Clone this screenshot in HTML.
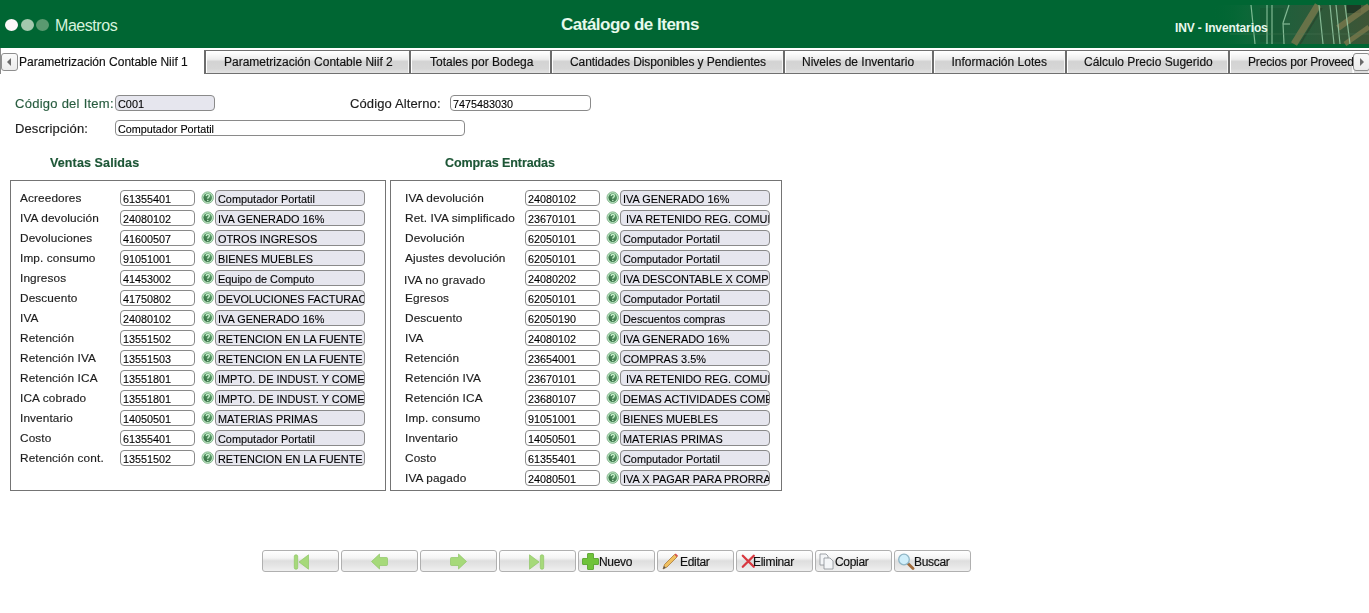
<!DOCTYPE html>
<html><head><meta charset="utf-8">
<style>
*{margin:0;padding:0;box-sizing:border-box}
html,body{width:1369px;height:613px;overflow:hidden;background:#fff;font-family:"Liberation Sans",sans-serif;position:relative}
#wrap{position:absolute;left:0;top:0;width:1369px;height:613px;filter:grayscale(0.001)}
.tab span,.lbl,.btn span{-webkit-text-stroke:0.15px currentColor}
.inp{-webkit-text-stroke:0.1px #000}
.a{position:absolute;white-space:nowrap}
#hdr{position:absolute;left:0;top:0;width:1369px;height:48px;background:#006633;overflow:hidden}
.dot{position:absolute;top:19px;width:13px;height:12px;border-radius:50%}
#tabs{position:absolute;left:0;top:48px;width:1369px;height:26px;overflow:hidden}
.tab{position:absolute;top:2px;height:24px;border:1px solid #707070;border-left:2px solid #6c6c6c;border-right:none;box-shadow:inset 1px 1px 0 #fff,inset -1px 0 0 #f6f6f6;
 background:linear-gradient(#ffffff 0%,#fbfbfb 12%,#ececec 38%,#d3d3d3 48%,#d6d6d6 80%,#e2e2e2 100%);
 font-size:12px;color:#111;white-space:nowrap;overflow:hidden}
.tab span{position:absolute;top:4px}
.tab.act{top:0;height:26px;background:#fff;border:none;border-left:1px solid #8a8a8a;box-shadow:none}
.sbtn{position:absolute;top:5px;width:17px;height:18px;border:1px solid #8e8e8e;border-radius:3px;background:linear-gradient(#fafafa,#ececec)}
.lbl{position:absolute;font-size:11.8px;letter-spacing:0.12px;color:#1c1c1c;white-space:nowrap}
.lb13{font-size:13px}
.inp{position:absolute;height:16px;border:1px solid #8a8a8a;border-radius:4px;background:#fff;font-size:10.8px;line-height:16px;padding-left:2px;color:#000;white-space:nowrap;overflow:hidden}
.gry{background:#e6e6ee;font-size:10.9px}
.box{position:absolute;border:1px solid #747474}
.ico{position:absolute;width:14px;height:14px}
.btn{position:absolute;top:550px;width:77px;height:22px;border:1px solid #b0b0b0;border-radius:3px;
 background:linear-gradient(#ffffff 0%,#f4f4f4 35%,#dedede 50%,#e6e6e6 75%,#f0f0f0 100%);font-size:12px;letter-spacing:-0.3px;color:#111}
.btn span{position:absolute;top:3.5px}
.btn svg{position:absolute}
</style></head><body><div id="wrap"><svg width="0" height="0" style="position:absolute"><defs><linearGradient id="ig" x1="0.8" y1="0.1" x2="0.2" y2="0.9"><stop offset="0" stop-color="#5f9e6c"/><stop offset="1" stop-color="#356f44"/></linearGradient></defs></svg>
<div id="hdr">
 <svg class="a" style="left:1210px;top:0" width="159" height="48" viewBox="0 0 159 48">
  <defs>
   <linearGradient id="hg" x1="0" x2="1" y1="0" y2="0">
    <stop offset="0" stop-color="#006633" stop-opacity="0"/>
    <stop offset="0.22" stop-color="#0b6838" stop-opacity="0.9"/>
    <stop offset="0.45" stop-color="#1f5f3b"/>
    <stop offset="0.7" stop-color="#2e5a3a"/>
    <stop offset="1" stop-color="#3e5536"/>
   </linearGradient>
   <filter id="bl" x="-5%" y="-5%" width="110%" height="110%"><feGaussianBlur stdDeviation="0.7"/></filter>
  </defs>
  <rect x="0" y="5" width="159" height="39" fill="url(#hg)"/>
  <g filter="url(#bl)">
  <rect x="137" y="5" width="14" height="8" fill="#17301f" opacity="0.8"/>
  <rect x="50" y="8" width="24" height="34" fill="#15552f" opacity="0.5"/>
  <g stroke="#7d7a4e" opacity="0.75">
   <line x1="84" y1="44" x2="108" y2="5" stroke-width="7"/>
   <line x1="128" y1="28" x2="159" y2="6" stroke-width="6"/>
   <line x1="135" y1="44" x2="159" y2="27" stroke-width="5"/>
  </g>
  <g stroke="#2a3f2a" opacity="0.6">
   <line x1="90" y1="44" x2="112" y2="8" stroke-width="1.5"/>
  </g>
  <g stroke="#a3d8b2" stroke-width="1.2" opacity="0.75">
   <line x1="41" y1="5" x2="45" y2="44"/><line x1="57" y1="5" x2="57" y2="44"/>
   <line x1="62" y1="5" x2="62" y2="44"/><line x1="73" y1="23" x2="74" y2="44"/>
   <line x1="73" y1="23" x2="79" y2="5"/><line x1="73" y1="24" x2="80" y2="24"/>
   <line x1="109" y1="5" x2="113" y2="44"/><line x1="120" y1="5" x2="124" y2="44"/>
   <line x1="126" y1="5" x2="130" y2="44"/><line x1="135" y1="5" x2="140" y2="44"/>
  </g>
  <line x1="20" y1="34" x2="159" y2="34" stroke="#4f7f5c" stroke-width="1" opacity="0.4"/>
  </g>
 </svg>
 <div class="dot" style="left:5px;background:#fcf7f9"></div>
 <div class="dot" style="left:21px;background:#a4c9ae"></div>
 <div class="dot" style="left:36px;background:#5a9a70"></div>
 <div class="a" style="left:55px;top:17px;font-size:16px;letter-spacing:-0.45px;color:#d6f3dd">Maestros</div>
 <div class="a" style="left:561px;top:15px;font-size:17px;letter-spacing:-0.5px;font-weight:bold;color:#e6f9ec">Catálogo de Items</div>
 <div class="a" style="left:1175px;top:21px;font-size:12px;font-weight:bold;color:#eaf8ee;letter-spacing:-0.12px">INV - Inventarios</div>
</div>
<div id="tabs">
 <div class="tab act" style="left:0;width:204px"><span style="left:18px;top:7px">Parametrización Contable Niif 1</span>
  <div class="sbtn" style="left:0px"><svg class="a" style="left:3px;top:3px" width="8" height="10"><path d="M2 5 L6 1 L6 9 Z" fill="#6a6a6a"/></svg></div>
 </div>
 <div class="tab" style="left:204px;width:205px"><span style="left:18px">Parametrización Contable Niif 2</span></div>
 <div class="tab" style="left:409px;width:141px"><span style="left:19px">Totales por Bodega</span></div>
 <div class="tab" style="left:550px;width:233px"><span style="left:18px;letter-spacing:-0.08px">Cantidades Disponibles y Pendientes</span></div>
 <div class="tab" style="left:783px;width:149px"><span style="left:17px">Niveles de Inventario</span></div>
 <div class="tab" style="left:932px;width:133px"><span style="left:17.5px">Información Lotes</span></div>
 <div class="tab" style="left:1065px;width:163px"><span style="left:17px">Cálculo Precio Sugerido</span></div>
 <div class="tab" style="left:1228px;width:125px"><span style="left:18px;letter-spacing:-0.15px">Precios por Proveedor</span></div>
 <div class="tab" style="left:1353px;width:16px;border-left:none"></div>
 <div class="sbtn" style="left:1353px"><svg class="a" style="left:4px;top:3px" width="8" height="10"><path d="M6 5 L2 1 L2 9 Z" fill="#6a6a6a"/></svg></div>
</div>

<div class="lbl lb13" style="left:15px;top:96px;color:#285c3f;letter-spacing:0.26px">Código del Item:</div>
<div class="inp gry" style="left:115px;top:95px;width:100px">C001</div>
<div class="lbl lb13" style="left:350px;top:96px">Código Alterno:</div>
<div class="inp" style="left:450px;top:95px;width:141px">7475483030</div>
<div class="lbl lb13" style="left:15px;top:121px">Descripción:</div>
<div class="inp" style="left:115px;top:120px;width:350px">Computador Portatil</div>
<div class="lbl" style="left:50px;top:156px;font-size:12.5px;font-weight:bold;color:#1d5636">Ventas Salidas</div>
<div class="lbl" style="left:445px;top:156px;font-size:12.5px;font-weight:bold;color:#1d5636;letter-spacing:-0.08px">Compras Entradas</div>
<div class="box" style="left:10px;top:180px;width:376px;height:311px"></div>
<div class="box" style="left:390px;top:180px;width:392px;height:311px"></div>
<div class="lbl" style="left:20px;top:191px">Acreedores</div>
<div class="inp" style="left:120px;top:190px;width:75px">61355401</div>
<svg class="ico" style="left:201px;top:191px" width="14" height="14" viewBox="0 0 14 14"><circle cx="6.7" cy="6.6" r="5.7" fill="#c4ecca" stroke="#76ab80" stroke-width="0.9"/><circle cx="6.7" cy="6.6" r="4.3" fill="url(#ig)"/><path d="M5.3 5.0 Q5.3 3.4 6.9 3.4 Q8.4 3.4 8.4 4.8 Q8.4 5.8 7.4 6.3 Q6.8 6.7 6.8 7.8" fill="none" stroke="#c6eecb" stroke-width="1.3"/><circle cx="6.8" cy="9.5" r="0.8" fill="#c6eecb"/></svg>
<div class="inp gry" style="left:215px;top:190px;width:150px">Computador Portatil</div>
<div class="lbl" style="left:20px;top:211px">IVA devolución</div>
<div class="inp" style="left:120px;top:210px;width:75px">24080102</div>
<svg class="ico" style="left:201px;top:211px" width="14" height="14" viewBox="0 0 14 14"><circle cx="6.7" cy="6.6" r="5.7" fill="#c4ecca" stroke="#76ab80" stroke-width="0.9"/><circle cx="6.7" cy="6.6" r="4.3" fill="url(#ig)"/><path d="M5.3 5.0 Q5.3 3.4 6.9 3.4 Q8.4 3.4 8.4 4.8 Q8.4 5.8 7.4 6.3 Q6.8 6.7 6.8 7.8" fill="none" stroke="#c6eecb" stroke-width="1.3"/><circle cx="6.8" cy="9.5" r="0.8" fill="#c6eecb"/></svg>
<div class="inp gry" style="left:215px;top:210px;width:150px">IVA GENERADO 16%</div>
<div class="lbl" style="left:20px;top:231px">Devoluciones</div>
<div class="inp" style="left:120px;top:230px;width:75px">41600507</div>
<svg class="ico" style="left:201px;top:231px" width="14" height="14" viewBox="0 0 14 14"><circle cx="6.7" cy="6.6" r="5.7" fill="#c4ecca" stroke="#76ab80" stroke-width="0.9"/><circle cx="6.7" cy="6.6" r="4.3" fill="url(#ig)"/><path d="M5.3 5.0 Q5.3 3.4 6.9 3.4 Q8.4 3.4 8.4 4.8 Q8.4 5.8 7.4 6.3 Q6.8 6.7 6.8 7.8" fill="none" stroke="#c6eecb" stroke-width="1.3"/><circle cx="6.8" cy="9.5" r="0.8" fill="#c6eecb"/></svg>
<div class="inp gry" style="left:215px;top:230px;width:150px">OTROS INGRESOS</div>
<div class="lbl" style="left:20px;top:251px">Imp. consumo</div>
<div class="inp" style="left:120px;top:250px;width:75px">91051001</div>
<svg class="ico" style="left:201px;top:251px" width="14" height="14" viewBox="0 0 14 14"><circle cx="6.7" cy="6.6" r="5.7" fill="#c4ecca" stroke="#76ab80" stroke-width="0.9"/><circle cx="6.7" cy="6.6" r="4.3" fill="url(#ig)"/><path d="M5.3 5.0 Q5.3 3.4 6.9 3.4 Q8.4 3.4 8.4 4.8 Q8.4 5.8 7.4 6.3 Q6.8 6.7 6.8 7.8" fill="none" stroke="#c6eecb" stroke-width="1.3"/><circle cx="6.8" cy="9.5" r="0.8" fill="#c6eecb"/></svg>
<div class="inp gry" style="left:215px;top:250px;width:150px">BIENES MUEBLES</div>
<div class="lbl" style="left:20px;top:271px">Ingresos</div>
<div class="inp" style="left:120px;top:270px;width:75px">41453002</div>
<svg class="ico" style="left:201px;top:271px" width="14" height="14" viewBox="0 0 14 14"><circle cx="6.7" cy="6.6" r="5.7" fill="#c4ecca" stroke="#76ab80" stroke-width="0.9"/><circle cx="6.7" cy="6.6" r="4.3" fill="url(#ig)"/><path d="M5.3 5.0 Q5.3 3.4 6.9 3.4 Q8.4 3.4 8.4 4.8 Q8.4 5.8 7.4 6.3 Q6.8 6.7 6.8 7.8" fill="none" stroke="#c6eecb" stroke-width="1.3"/><circle cx="6.8" cy="9.5" r="0.8" fill="#c6eecb"/></svg>
<div class="inp gry" style="left:215px;top:270px;width:150px">Equipo de Computo</div>
<div class="lbl" style="left:20px;top:291px">Descuento</div>
<div class="inp" style="left:120px;top:290px;width:75px">41750802</div>
<svg class="ico" style="left:201px;top:291px" width="14" height="14" viewBox="0 0 14 14"><circle cx="6.7" cy="6.6" r="5.7" fill="#c4ecca" stroke="#76ab80" stroke-width="0.9"/><circle cx="6.7" cy="6.6" r="4.3" fill="url(#ig)"/><path d="M5.3 5.0 Q5.3 3.4 6.9 3.4 Q8.4 3.4 8.4 4.8 Q8.4 5.8 7.4 6.3 Q6.8 6.7 6.8 7.8" fill="none" stroke="#c6eecb" stroke-width="1.3"/><circle cx="6.8" cy="9.5" r="0.8" fill="#c6eecb"/></svg>
<div class="inp gry" style="left:215px;top:290px;width:150px">DEVOLUCIONES FACTURACION</div>
<div class="lbl" style="left:20px;top:311px">IVA</div>
<div class="inp" style="left:120px;top:310px;width:75px">24080102</div>
<svg class="ico" style="left:201px;top:311px" width="14" height="14" viewBox="0 0 14 14"><circle cx="6.7" cy="6.6" r="5.7" fill="#c4ecca" stroke="#76ab80" stroke-width="0.9"/><circle cx="6.7" cy="6.6" r="4.3" fill="url(#ig)"/><path d="M5.3 5.0 Q5.3 3.4 6.9 3.4 Q8.4 3.4 8.4 4.8 Q8.4 5.8 7.4 6.3 Q6.8 6.7 6.8 7.8" fill="none" stroke="#c6eecb" stroke-width="1.3"/><circle cx="6.8" cy="9.5" r="0.8" fill="#c6eecb"/></svg>
<div class="inp gry" style="left:215px;top:310px;width:150px">IVA GENERADO 16%</div>
<div class="lbl" style="left:20px;top:331px">Retención</div>
<div class="inp" style="left:120px;top:330px;width:75px">13551502</div>
<svg class="ico" style="left:201px;top:331px" width="14" height="14" viewBox="0 0 14 14"><circle cx="6.7" cy="6.6" r="5.7" fill="#c4ecca" stroke="#76ab80" stroke-width="0.9"/><circle cx="6.7" cy="6.6" r="4.3" fill="url(#ig)"/><path d="M5.3 5.0 Q5.3 3.4 6.9 3.4 Q8.4 3.4 8.4 4.8 Q8.4 5.8 7.4 6.3 Q6.8 6.7 6.8 7.8" fill="none" stroke="#c6eecb" stroke-width="1.3"/><circle cx="6.8" cy="9.5" r="0.8" fill="#c6eecb"/></svg>
<div class="inp gry" style="left:215px;top:330px;width:150px">RETENCION EN LA FUENTE</div>
<div class="lbl" style="left:20px;top:351px">Retención IVA</div>
<div class="inp" style="left:120px;top:350px;width:75px">13551503</div>
<svg class="ico" style="left:201px;top:351px" width="14" height="14" viewBox="0 0 14 14"><circle cx="6.7" cy="6.6" r="5.7" fill="#c4ecca" stroke="#76ab80" stroke-width="0.9"/><circle cx="6.7" cy="6.6" r="4.3" fill="url(#ig)"/><path d="M5.3 5.0 Q5.3 3.4 6.9 3.4 Q8.4 3.4 8.4 4.8 Q8.4 5.8 7.4 6.3 Q6.8 6.7 6.8 7.8" fill="none" stroke="#c6eecb" stroke-width="1.3"/><circle cx="6.8" cy="9.5" r="0.8" fill="#c6eecb"/></svg>
<div class="inp gry" style="left:215px;top:350px;width:150px">RETENCION EN LA FUENTE</div>
<div class="lbl" style="left:20px;top:371px">Retención ICA</div>
<div class="inp" style="left:120px;top:370px;width:75px">13551801</div>
<svg class="ico" style="left:201px;top:371px" width="14" height="14" viewBox="0 0 14 14"><circle cx="6.7" cy="6.6" r="5.7" fill="#c4ecca" stroke="#76ab80" stroke-width="0.9"/><circle cx="6.7" cy="6.6" r="4.3" fill="url(#ig)"/><path d="M5.3 5.0 Q5.3 3.4 6.9 3.4 Q8.4 3.4 8.4 4.8 Q8.4 5.8 7.4 6.3 Q6.8 6.7 6.8 7.8" fill="none" stroke="#c6eecb" stroke-width="1.3"/><circle cx="6.8" cy="9.5" r="0.8" fill="#c6eecb"/></svg>
<div class="inp gry" style="left:215px;top:370px;width:150px">IMPTO. DE INDUST. Y COMERCIO</div>
<div class="lbl" style="left:20px;top:391px">ICA cobrado</div>
<div class="inp" style="left:120px;top:390px;width:75px">13551801</div>
<svg class="ico" style="left:201px;top:391px" width="14" height="14" viewBox="0 0 14 14"><circle cx="6.7" cy="6.6" r="5.7" fill="#c4ecca" stroke="#76ab80" stroke-width="0.9"/><circle cx="6.7" cy="6.6" r="4.3" fill="url(#ig)"/><path d="M5.3 5.0 Q5.3 3.4 6.9 3.4 Q8.4 3.4 8.4 4.8 Q8.4 5.8 7.4 6.3 Q6.8 6.7 6.8 7.8" fill="none" stroke="#c6eecb" stroke-width="1.3"/><circle cx="6.8" cy="9.5" r="0.8" fill="#c6eecb"/></svg>
<div class="inp gry" style="left:215px;top:390px;width:150px">IMPTO. DE INDUST. Y COMERCIO</div>
<div class="lbl" style="left:20px;top:411px">Inventario</div>
<div class="inp" style="left:120px;top:410px;width:75px">14050501</div>
<svg class="ico" style="left:201px;top:411px" width="14" height="14" viewBox="0 0 14 14"><circle cx="6.7" cy="6.6" r="5.7" fill="#c4ecca" stroke="#76ab80" stroke-width="0.9"/><circle cx="6.7" cy="6.6" r="4.3" fill="url(#ig)"/><path d="M5.3 5.0 Q5.3 3.4 6.9 3.4 Q8.4 3.4 8.4 4.8 Q8.4 5.8 7.4 6.3 Q6.8 6.7 6.8 7.8" fill="none" stroke="#c6eecb" stroke-width="1.3"/><circle cx="6.8" cy="9.5" r="0.8" fill="#c6eecb"/></svg>
<div class="inp gry" style="left:215px;top:410px;width:150px">MATERIAS PRIMAS</div>
<div class="lbl" style="left:20px;top:431px">Costo</div>
<div class="inp" style="left:120px;top:430px;width:75px">61355401</div>
<svg class="ico" style="left:201px;top:431px" width="14" height="14" viewBox="0 0 14 14"><circle cx="6.7" cy="6.6" r="5.7" fill="#c4ecca" stroke="#76ab80" stroke-width="0.9"/><circle cx="6.7" cy="6.6" r="4.3" fill="url(#ig)"/><path d="M5.3 5.0 Q5.3 3.4 6.9 3.4 Q8.4 3.4 8.4 4.8 Q8.4 5.8 7.4 6.3 Q6.8 6.7 6.8 7.8" fill="none" stroke="#c6eecb" stroke-width="1.3"/><circle cx="6.8" cy="9.5" r="0.8" fill="#c6eecb"/></svg>
<div class="inp gry" style="left:215px;top:430px;width:150px">Computador Portatil</div>
<div class="lbl" style="left:20px;top:451px">Retención cont.</div>
<div class="inp" style="left:120px;top:450px;width:75px">13551502</div>
<svg class="ico" style="left:201px;top:451px" width="14" height="14" viewBox="0 0 14 14"><circle cx="6.7" cy="6.6" r="5.7" fill="#c4ecca" stroke="#76ab80" stroke-width="0.9"/><circle cx="6.7" cy="6.6" r="4.3" fill="url(#ig)"/><path d="M5.3 5.0 Q5.3 3.4 6.9 3.4 Q8.4 3.4 8.4 4.8 Q8.4 5.8 7.4 6.3 Q6.8 6.7 6.8 7.8" fill="none" stroke="#c6eecb" stroke-width="1.3"/><circle cx="6.8" cy="9.5" r="0.8" fill="#c6eecb"/></svg>
<div class="inp gry" style="left:215px;top:450px;width:150px">RETENCION EN LA FUENTE</div>
<div class="lbl" style="left:405px;top:191px">IVA devolución</div>
<div class="inp" style="left:525px;top:190px;width:75px">24080102</div>
<svg class="ico" style="left:606px;top:191px" width="14" height="14" viewBox="0 0 14 14"><circle cx="6.7" cy="6.6" r="5.7" fill="#c4ecca" stroke="#76ab80" stroke-width="0.9"/><circle cx="6.7" cy="6.6" r="4.3" fill="url(#ig)"/><path d="M5.3 5.0 Q5.3 3.4 6.9 3.4 Q8.4 3.4 8.4 4.8 Q8.4 5.8 7.4 6.3 Q6.8 6.7 6.8 7.8" fill="none" stroke="#c6eecb" stroke-width="1.3"/><circle cx="6.8" cy="9.5" r="0.8" fill="#c6eecb"/></svg>
<div class="inp gry" style="left:620px;top:190px;width:150px">IVA GENERADO 16%</div>
<div class="lbl" style="left:405px;top:211px">Ret. IVA simplificado</div>
<div class="inp" style="left:525px;top:210px;width:75px">23670101</div>
<svg class="ico" style="left:606px;top:211px" width="14" height="14" viewBox="0 0 14 14"><circle cx="6.7" cy="6.6" r="5.7" fill="#c4ecca" stroke="#76ab80" stroke-width="0.9"/><circle cx="6.7" cy="6.6" r="4.3" fill="url(#ig)"/><path d="M5.3 5.0 Q5.3 3.4 6.9 3.4 Q8.4 3.4 8.4 4.8 Q8.4 5.8 7.4 6.3 Q6.8 6.7 6.8 7.8" fill="none" stroke="#c6eecb" stroke-width="1.3"/><circle cx="6.8" cy="9.5" r="0.8" fill="#c6eecb"/></svg>
<div class="inp gry" style="left:620px;top:210px;width:150px">&nbsp;IVA RETENIDO REG. COMUN</div>
<div class="lbl" style="left:405px;top:231px">Devolución</div>
<div class="inp" style="left:525px;top:230px;width:75px">62050101</div>
<svg class="ico" style="left:606px;top:231px" width="14" height="14" viewBox="0 0 14 14"><circle cx="6.7" cy="6.6" r="5.7" fill="#c4ecca" stroke="#76ab80" stroke-width="0.9"/><circle cx="6.7" cy="6.6" r="4.3" fill="url(#ig)"/><path d="M5.3 5.0 Q5.3 3.4 6.9 3.4 Q8.4 3.4 8.4 4.8 Q8.4 5.8 7.4 6.3 Q6.8 6.7 6.8 7.8" fill="none" stroke="#c6eecb" stroke-width="1.3"/><circle cx="6.8" cy="9.5" r="0.8" fill="#c6eecb"/></svg>
<div class="inp gry" style="left:620px;top:230px;width:150px">Computador Portatil</div>
<div class="lbl" style="left:405px;top:251px">Ajustes devolución</div>
<div class="inp" style="left:525px;top:250px;width:75px">62050101</div>
<svg class="ico" style="left:606px;top:251px" width="14" height="14" viewBox="0 0 14 14"><circle cx="6.7" cy="6.6" r="5.7" fill="#c4ecca" stroke="#76ab80" stroke-width="0.9"/><circle cx="6.7" cy="6.6" r="4.3" fill="url(#ig)"/><path d="M5.3 5.0 Q5.3 3.4 6.9 3.4 Q8.4 3.4 8.4 4.8 Q8.4 5.8 7.4 6.3 Q6.8 6.7 6.8 7.8" fill="none" stroke="#c6eecb" stroke-width="1.3"/><circle cx="6.8" cy="9.5" r="0.8" fill="#c6eecb"/></svg>
<div class="inp gry" style="left:620px;top:250px;width:150px">Computador Portatil</div>
<div class="lbl" style="left:404px;top:273px">IVA no gravado</div>
<div class="inp" style="left:525px;top:270px;width:75px">24080202</div>
<svg class="ico" style="left:606px;top:271px" width="14" height="14" viewBox="0 0 14 14"><circle cx="6.7" cy="6.6" r="5.7" fill="#c4ecca" stroke="#76ab80" stroke-width="0.9"/><circle cx="6.7" cy="6.6" r="4.3" fill="url(#ig)"/><path d="M5.3 5.0 Q5.3 3.4 6.9 3.4 Q8.4 3.4 8.4 4.8 Q8.4 5.8 7.4 6.3 Q6.8 6.7 6.8 7.8" fill="none" stroke="#c6eecb" stroke-width="1.3"/><circle cx="6.8" cy="9.5" r="0.8" fill="#c6eecb"/></svg>
<div class="inp gry" style="left:620px;top:270px;width:150px">IVA DESCONTABLE X COMPRAS</div>
<div class="lbl" style="left:405px;top:291px">Egresos</div>
<div class="inp" style="left:525px;top:290px;width:75px">62050101</div>
<svg class="ico" style="left:606px;top:291px" width="14" height="14" viewBox="0 0 14 14"><circle cx="6.7" cy="6.6" r="5.7" fill="#c4ecca" stroke="#76ab80" stroke-width="0.9"/><circle cx="6.7" cy="6.6" r="4.3" fill="url(#ig)"/><path d="M5.3 5.0 Q5.3 3.4 6.9 3.4 Q8.4 3.4 8.4 4.8 Q8.4 5.8 7.4 6.3 Q6.8 6.7 6.8 7.8" fill="none" stroke="#c6eecb" stroke-width="1.3"/><circle cx="6.8" cy="9.5" r="0.8" fill="#c6eecb"/></svg>
<div class="inp gry" style="left:620px;top:290px;width:150px">Computador Portatil</div>
<div class="lbl" style="left:405px;top:311px">Descuento</div>
<div class="inp" style="left:525px;top:310px;width:75px">62050190</div>
<svg class="ico" style="left:606px;top:311px" width="14" height="14" viewBox="0 0 14 14"><circle cx="6.7" cy="6.6" r="5.7" fill="#c4ecca" stroke="#76ab80" stroke-width="0.9"/><circle cx="6.7" cy="6.6" r="4.3" fill="url(#ig)"/><path d="M5.3 5.0 Q5.3 3.4 6.9 3.4 Q8.4 3.4 8.4 4.8 Q8.4 5.8 7.4 6.3 Q6.8 6.7 6.8 7.8" fill="none" stroke="#c6eecb" stroke-width="1.3"/><circle cx="6.8" cy="9.5" r="0.8" fill="#c6eecb"/></svg>
<div class="inp gry" style="left:620px;top:310px;width:150px">Descuentos compras</div>
<div class="lbl" style="left:405px;top:331px">IVA</div>
<div class="inp" style="left:525px;top:330px;width:75px">24080102</div>
<svg class="ico" style="left:606px;top:331px" width="14" height="14" viewBox="0 0 14 14"><circle cx="6.7" cy="6.6" r="5.7" fill="#c4ecca" stroke="#76ab80" stroke-width="0.9"/><circle cx="6.7" cy="6.6" r="4.3" fill="url(#ig)"/><path d="M5.3 5.0 Q5.3 3.4 6.9 3.4 Q8.4 3.4 8.4 4.8 Q8.4 5.8 7.4 6.3 Q6.8 6.7 6.8 7.8" fill="none" stroke="#c6eecb" stroke-width="1.3"/><circle cx="6.8" cy="9.5" r="0.8" fill="#c6eecb"/></svg>
<div class="inp gry" style="left:620px;top:330px;width:150px">IVA GENERADO 16%</div>
<div class="lbl" style="left:405px;top:351px">Retención</div>
<div class="inp" style="left:525px;top:350px;width:75px">23654001</div>
<svg class="ico" style="left:606px;top:351px" width="14" height="14" viewBox="0 0 14 14"><circle cx="6.7" cy="6.6" r="5.7" fill="#c4ecca" stroke="#76ab80" stroke-width="0.9"/><circle cx="6.7" cy="6.6" r="4.3" fill="url(#ig)"/><path d="M5.3 5.0 Q5.3 3.4 6.9 3.4 Q8.4 3.4 8.4 4.8 Q8.4 5.8 7.4 6.3 Q6.8 6.7 6.8 7.8" fill="none" stroke="#c6eecb" stroke-width="1.3"/><circle cx="6.8" cy="9.5" r="0.8" fill="#c6eecb"/></svg>
<div class="inp gry" style="left:620px;top:350px;width:150px">COMPRAS 3.5%</div>
<div class="lbl" style="left:405px;top:371px">Retención IVA</div>
<div class="inp" style="left:525px;top:370px;width:75px">23670101</div>
<svg class="ico" style="left:606px;top:371px" width="14" height="14" viewBox="0 0 14 14"><circle cx="6.7" cy="6.6" r="5.7" fill="#c4ecca" stroke="#76ab80" stroke-width="0.9"/><circle cx="6.7" cy="6.6" r="4.3" fill="url(#ig)"/><path d="M5.3 5.0 Q5.3 3.4 6.9 3.4 Q8.4 3.4 8.4 4.8 Q8.4 5.8 7.4 6.3 Q6.8 6.7 6.8 7.8" fill="none" stroke="#c6eecb" stroke-width="1.3"/><circle cx="6.8" cy="9.5" r="0.8" fill="#c6eecb"/></svg>
<div class="inp gry" style="left:620px;top:370px;width:150px">&nbsp;IVA RETENIDO REG. COMUN</div>
<div class="lbl" style="left:405px;top:391px">Retención ICA</div>
<div class="inp" style="left:525px;top:390px;width:75px">23680107</div>
<svg class="ico" style="left:606px;top:391px" width="14" height="14" viewBox="0 0 14 14"><circle cx="6.7" cy="6.6" r="5.7" fill="#c4ecca" stroke="#76ab80" stroke-width="0.9"/><circle cx="6.7" cy="6.6" r="4.3" fill="url(#ig)"/><path d="M5.3 5.0 Q5.3 3.4 6.9 3.4 Q8.4 3.4 8.4 4.8 Q8.4 5.8 7.4 6.3 Q6.8 6.7 6.8 7.8" fill="none" stroke="#c6eecb" stroke-width="1.3"/><circle cx="6.8" cy="9.5" r="0.8" fill="#c6eecb"/></svg>
<div class="inp gry" style="left:620px;top:390px;width:150px">DEMAS ACTIVIDADES COMERCIALES</div>
<div class="lbl" style="left:405px;top:411px">Imp. consumo</div>
<div class="inp" style="left:525px;top:410px;width:75px">91051001</div>
<svg class="ico" style="left:606px;top:411px" width="14" height="14" viewBox="0 0 14 14"><circle cx="6.7" cy="6.6" r="5.7" fill="#c4ecca" stroke="#76ab80" stroke-width="0.9"/><circle cx="6.7" cy="6.6" r="4.3" fill="url(#ig)"/><path d="M5.3 5.0 Q5.3 3.4 6.9 3.4 Q8.4 3.4 8.4 4.8 Q8.4 5.8 7.4 6.3 Q6.8 6.7 6.8 7.8" fill="none" stroke="#c6eecb" stroke-width="1.3"/><circle cx="6.8" cy="9.5" r="0.8" fill="#c6eecb"/></svg>
<div class="inp gry" style="left:620px;top:410px;width:150px">BIENES MUEBLES</div>
<div class="lbl" style="left:405px;top:431px">Inventario</div>
<div class="inp" style="left:525px;top:430px;width:75px">14050501</div>
<svg class="ico" style="left:606px;top:431px" width="14" height="14" viewBox="0 0 14 14"><circle cx="6.7" cy="6.6" r="5.7" fill="#c4ecca" stroke="#76ab80" stroke-width="0.9"/><circle cx="6.7" cy="6.6" r="4.3" fill="url(#ig)"/><path d="M5.3 5.0 Q5.3 3.4 6.9 3.4 Q8.4 3.4 8.4 4.8 Q8.4 5.8 7.4 6.3 Q6.8 6.7 6.8 7.8" fill="none" stroke="#c6eecb" stroke-width="1.3"/><circle cx="6.8" cy="9.5" r="0.8" fill="#c6eecb"/></svg>
<div class="inp gry" style="left:620px;top:430px;width:150px">MATERIAS PRIMAS</div>
<div class="lbl" style="left:405px;top:451px">Costo</div>
<div class="inp" style="left:525px;top:450px;width:75px">61355401</div>
<svg class="ico" style="left:606px;top:451px" width="14" height="14" viewBox="0 0 14 14"><circle cx="6.7" cy="6.6" r="5.7" fill="#c4ecca" stroke="#76ab80" stroke-width="0.9"/><circle cx="6.7" cy="6.6" r="4.3" fill="url(#ig)"/><path d="M5.3 5.0 Q5.3 3.4 6.9 3.4 Q8.4 3.4 8.4 4.8 Q8.4 5.8 7.4 6.3 Q6.8 6.7 6.8 7.8" fill="none" stroke="#c6eecb" stroke-width="1.3"/><circle cx="6.8" cy="9.5" r="0.8" fill="#c6eecb"/></svg>
<div class="inp gry" style="left:620px;top:450px;width:150px">Computador Portatil</div>
<div class="lbl" style="left:405px;top:471px">IVA pagado</div>
<div class="inp" style="left:525px;top:470px;width:75px">24080501</div>
<svg class="ico" style="left:606px;top:471px" width="14" height="14" viewBox="0 0 14 14"><circle cx="6.7" cy="6.6" r="5.7" fill="#c4ecca" stroke="#76ab80" stroke-width="0.9"/><circle cx="6.7" cy="6.6" r="4.3" fill="url(#ig)"/><path d="M5.3 5.0 Q5.3 3.4 6.9 3.4 Q8.4 3.4 8.4 4.8 Q8.4 5.8 7.4 6.3 Q6.8 6.7 6.8 7.8" fill="none" stroke="#c6eecb" stroke-width="1.3"/><circle cx="6.8" cy="9.5" r="0.8" fill="#c6eecb"/></svg>
<div class="inp gry" style="left:620px;top:470px;width:150px">IVA X PAGAR PARA PRORRATEO</div>
<div class="btn" style="left:262px"><svg style="left:30px;top:3px" width="16" height="16" viewBox="0 0 16 16"><rect x="1.3" y="0.8" width="3.4" height="14.4" rx="1.5" fill="#a6d97a" stroke="#8fc765" stroke-width="0.7"/><path d="M6 8 L15.5 0.8 L15.5 15.2 Z" fill="#a6d97a" stroke="#8fc765" stroke-width="0.7" stroke-linejoin="round"/></svg></div>
<div class="btn" style="left:341px"><svg style="left:29px;top:2px" width="17" height="17" viewBox="0 0 17 17"><path d="M0.5 8.5 L8.5 1 L8.5 4.5 L15.5 4.5 Q16.5 4.5 16.5 5.5 L16.5 11.5 Q16.5 12.5 15.5 12.5 L8.5 12.5 L8.5 16 Z" fill="#a6d97a" stroke="#8fc765" stroke-width="0.7" stroke-linejoin="round"/></svg></div>
<div class="btn" style="left:420px"><svg style="left:29px;top:2px" width="17" height="17" viewBox="0 0 17 17"><path d="M16.5 8.5 L8.5 1 L8.5 4.5 L1.5 4.5 Q0.5 4.5 0.5 5.5 L0.5 11.5 Q0.5 12.5 1.5 12.5 L8.5 12.5 L8.5 16 Z" fill="#a6d97a" stroke="#8fc765" stroke-width="0.7" stroke-linejoin="round"/></svg></div>
<div class="btn" style="left:499px"><svg style="left:29px;top:3px" width="16" height="16" viewBox="0 0 16 16"><path d="M0.5 0.8 L10 8 L0.5 15.2 Z" fill="#a6d97a" stroke="#8fc765" stroke-width="0.7" stroke-linejoin="round"/><rect x="11.3" y="0.8" width="3.4" height="14.4" rx="1.5" fill="#a6d97a" stroke="#8fc765" stroke-width="0.7"/></svg></div>
<div class="btn" style="left:578px"><svg style="left:3px;top:2px" width="17" height="17" viewBox="0 0 17 17"><path d="M6 0.5 H11 Q11.5 0.5 11.5 1 V5.5 H16 Q16.5 5.5 16.5 6 V11 Q16.5 11.5 16 11.5 H11.5 V16 Q11.5 16.5 11 16.5 H6 Q5.5 16.5 5.5 16 V11.5 H1 Q0.5 11.5 0.5 11 V6 Q0.5 5.5 1 5.5 H5.5 V1 Q5.5 0.5 6 0.5 Z" fill="#6fc23a" stroke="#4f9e22" stroke-width="0.8"/></svg><span style="left:20px">Nuevo</span></div>
<div class="btn" style="left:657px"><svg style="left:3px;top:2px" width="18" height="17" viewBox="0 0 18 17"><path d="M2 16 L3.5 11.5 L13.5 1.5 L16 4 L6 14 Z" fill="#f0c060" stroke="#a8783a" stroke-width="0.8"/><path d="M13.5 1.5 L14.8 0.6 L17.2 3 L16 4 Z" fill="#d9534f"/><path d="M2 16 L3 13 L4.8 14.8 Z" fill="#555"/></svg><span style="left:22px">Editar</span></div>
<div class="btn" style="left:736px"><svg style="left:4px;top:3px" width="15" height="15" viewBox="0 0 15 15"><path d="M1.8 1.8 L12.8 12.8 M12.8 1.8 L1.8 12.8" stroke="#d8373f" stroke-width="2.3" stroke-linecap="round"/></svg><span style="left:16px">Eliminar</span></div>
<div class="btn" style="left:815px"><svg style="left:3px;top:2px" width="16" height="17" viewBox="0 0 16 17"><path d="M1 1 H7 L9 3 V12 H1 Z" fill="#f4f6f8" stroke="#8a8f96" stroke-width="0.8"/><path d="M5 5 H11 L14 8 V16 H5 Z" fill="#f4f6f8" stroke="#8a8f96" stroke-width="0.8"/></svg><span style="left:19px">Copiar</span></div>
<div class="btn" style="left:894px"><svg style="left:2px;top:2px" width="18" height="17" viewBox="0 0 18 17"><line x1="10" y1="9.5" x2="16" y2="15.5" stroke="#a06a3a" stroke-width="2.8" stroke-linecap="round"/><circle cx="7" cy="6.5" r="5.3" fill="#cfeefa" stroke="#8fb6c6" stroke-width="1.3"/></svg><span style="left:19px">Buscar</span></div>
</div></body></html>
